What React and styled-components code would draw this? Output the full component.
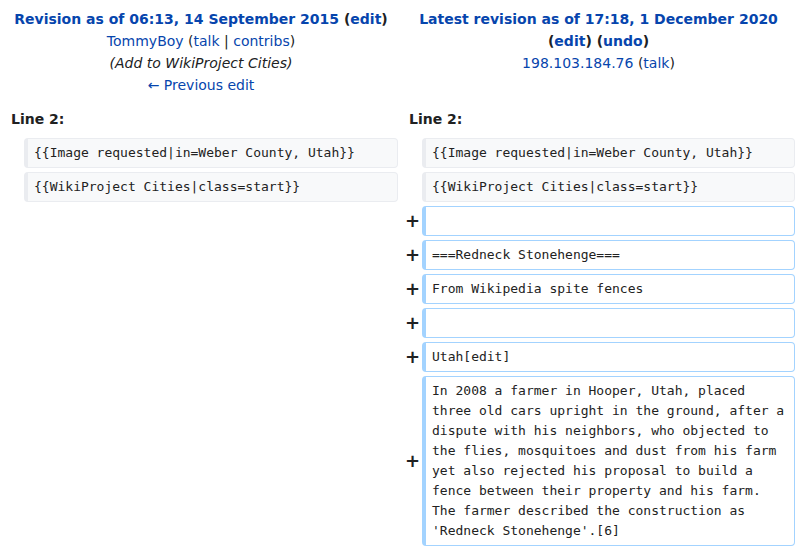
import { Fragment } from "react";
import styled, { createGlobalStyle } from "styled-components";

const GlobalStyle = createGlobalStyle`
    body {
        margin: 0;
        background: #ffffff;
        color: #202122;
        font-family: "DejaVu Sans", sans-serif;
    }
`;

const DiffTable = styled.div`
    display: grid;
    grid-template-columns: 16px 374px 16px 373px;
    column-gap: 4px;
    row-gap: 4px;
    padding: 4px;
    font-size: 14px;
    line-height: 22px;
`;

const TitleCell = styled.div`
    grid-column: span 2;
    text-align: center;
    padding: 4px 10px;
`;

const Line = styled.div`
    font-weight: ${({ bold }) => (bold ? "bold" : "normal")};
    font-style: ${({ italic }) => (italic ? "italic" : "normal")};
`;

const Link = styled.a`
    color: #0645ad;
    text-decoration: none;
    cursor: pointer;
`;

const LineNo = styled.div`
    grid-column: span 2;
    font-weight: bold;
    padding: 4px 7px;
`;

const Marker = styled.div`
    display: flex;
    align-items: center;
    justify-content: flex-end;
    font-weight: bold;
    font-size: 18px;
    margin-right: -2px;
`;

const Content = styled.div`
    font-family: "DejaVu Sans Mono", monospace;
    font-size: 13px;
    line-height: 20px;
    color: #222222;
    white-space: pre-wrap;
    word-wrap: break-word;
    padding: 4px 6px;
    min-height: 20px;
    border: 1px solid ${({ added }) => (added ? "#a3d3ff" : "#eaecf0")};
    border-left-width: 4px;
    border-radius: 4px;
    background: ${({ added }) => (added ? "#ffffff" : "#f8f9fa")};
`;

const Empty = styled.div``;

const context = [
    "{{Image requested|in=Weber County, Utah}}",
    "{{WikiProject Cities|class=start}}",
];

const added = [
    "",
    "===Redneck Stonehenge===",
    "From Wikipedia spite fences",
    "",
    "Utah[edit]",
    "In 2008 a farmer in Hooper, Utah, placed three old cars upright in the ground, after a dispute with his neighbors, who objected to the flies, mosquitoes and dust from his farm yet also rejected his proposal to build a fence between their property and his farm. The farmer described the construction as 'Redneck Stonehenge'.[6]",
];

const App = () => {
    return (
        <>
            <GlobalStyle />
            <DiffTable>
                <TitleCell>
                    <Line bold>
                        <Link>Revision as of 06:13, 14 September 2015</Link> (<Link>edit</Link>)
                    </Line>
                    <Line>
                        <Link>TommyBoy</Link> (<Link>talk</Link> | <Link>contribs</Link>)
                    </Line>
                    <Line italic>(Add to WikiProject Cities)</Line>
                    <Line>
                        <Link>← Previous edit</Link>
                    </Line>
                </TitleCell>
                <TitleCell>
                    <Line bold>
                        <Link>Latest revision as of 17:18, 1 December 2020</Link> (<Link>edit</Link>) (<Link>undo</Link>)
                    </Line>
                    <Line>
                        <Link>198.103.184.76</Link> (<Link>talk</Link>)
                    </Line>
                </TitleCell>

                <LineNo>Line 2:</LineNo>
                <LineNo>Line 2:</LineNo>

                {context.map((text, i) => (
                    <Fragment key={`c${i}`}>
                        <Empty />
                        <Content>{text}</Content>
                        <Empty />
                        <Content>{text}</Content>
                    </Fragment>
                ))}

                {added.map((text, i) => (
                    <Fragment key={`a${i}`}>
                        <Empty />
                        <Empty />
                        <Marker>+</Marker>
                        <Content added>{text}</Content>
                    </Fragment>
                ))}
            </DiffTable>
        </>
    );
};

export default App;
